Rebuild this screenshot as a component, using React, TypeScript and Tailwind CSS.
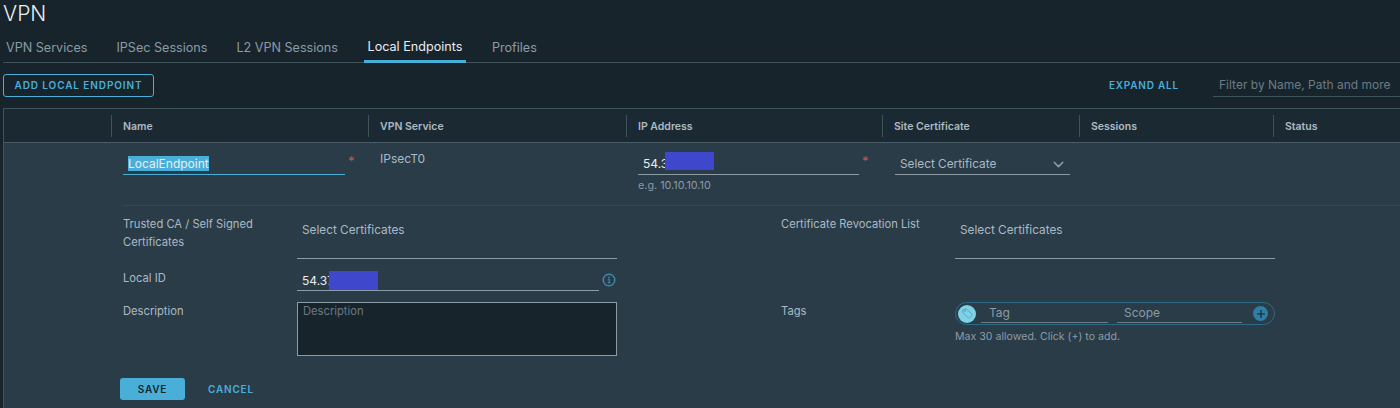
import { FiChevronDown } from "react-icons/fi";

const tabs = ["VPN Services", "IPSec Sessions", "L2 VPN Sessions", "Local Endpoints", "Profiles"];

const columns = [
  { label: "", width: "w-[107px]" },
  { label: "Name", width: "w-[257px]" },
  { label: "VPN Service", width: "w-[258px]" },
  { label: "IP Address", width: "w-[256px]" },
  { label: "Site Certificate", width: "w-[197px]" },
  { label: "Sessions", width: "w-[194px]" },
  { label: "Status", width: "flex-1" },
];

function Required() {
  return <span className="text-[13px] leading-none text-[#c25450]">*</span>;
}

function Redacted({ className }: { className: string }) {
  return <div className={`absolute bg-[#3f48cc] ${className}`} />;
}

function TagIcon() {
  return (
    <svg viewBox="0 0 16 16" className="h-[13px] w-[13px]" fill="none" stroke="#5ba3bd" strokeWidth="1.2">
      <path d="M2 3.6 6.4 2.4l7.2 6.4a1 1 0 0 1 0 1.4l-3.2 3.2a1 1 0 0 1-1.4 0L2.6 7.6z" />
      <circle cx="5" cy="5" r="0.8" />
    </svg>
  );
}

function InfoIcon() {
  return (
    <svg viewBox="0 0 14 14" className="h-[14px] w-[14px]" fill="none" stroke="#3d93b8">
      <circle cx="7" cy="7" r="5.8" strokeWidth="1.3" />
      <path d="M6 6.2h1.2v3.4M5.8 9.8h2.8" strokeWidth="1" />
      <path d="M7 3.6v1.3" strokeWidth="1.3" />
    </svg>
  );
}

export default function App() {
  return (
    <div className="h-[408px] w-[1400px] overflow-hidden bg-[#17242b] font-['Inter',sans-serif] text-[#acbac3]">
      {/* Title */}
      <h1 className="h-[31px] pl-[3px] text-[21px] font-light leading-[28px] text-[#eaedf0]">VPN</h1>

      {/* Tabs */}
      <div className="ml-[3px] flex h-[32px] gap-[29px] border-b border-[#3f5159] pl-[3px] text-[12.6px]">
        {tabs.map((tab) => (
          <div
            key={tab}
            className={
              tab === "Local Endpoints"
                ? "-mx-[3px] -mb-px flex h-[32px] w-[102px] items-center justify-center border-b-[3px] border-[#49afd9] pt-[4px] text-[#eaedf0]"
                : "flex h-[31px] items-center pt-[3px] text-[#8c9ba4]"
            }
          >
            {tab}
          </div>
        ))}
      </div>

      {/* Toolbar */}
      <div className="mt-[11px] flex h-[23px] items-center pl-[3px]">
        <button className="h-[23px] w-[151px] rounded-[3px] border border-[#49afd9] text-[10px] font-semibold tracking-[0.09em] text-[#49afd9]">
          ADD LOCAL ENDPOINT
        </button>
        <span className="ml-auto text-[10px] font-semibold tracking-[0.08em] text-[#49afd9]">EXPAND ALL</span>
        <div className="ml-[34px] flex h-[23px] w-[187px] items-center border-b border-[#3f5159] pl-[6px] text-[12px] text-[#6b7b84]">
          Filter by Name, Path and more
        </div>
      </div>

      {/* Grid */}
      <div className="ml-[3px] mt-[11px] border-l border-t border-[#3f5159]">
        <div className="flex h-[34px] items-center border-b border-[#4a5c66] bg-[#1b2a32] text-[10.5px] font-semibold text-[#acbac3]">
          {columns.map((col, i) => (
            <div key={col.label} className={`flex h-[22px] items-center pt-[2px] ${col.width} ${i > 0 ? "border-l border-[#3f5159] pl-[11px]" : ""}`}>
              {col.label}
            </div>
          ))}
        </div>

        <div className="h-[300px] bg-[#293c48] pl-[119px] text-[11.2px]">
          {/* Row fields */}
          <div className="flex h-[63px] border-b border-[#344853]">
            <div className="flex w-[229px] items-start gap-[3px]">
              <div className="mt-[9px] h-[23px] w-[222px] shrink-0 border-b border-[#49afd9] pl-[5px] pt-[4px] text-[12px] leading-[16px]">
                <span className="bg-[#49afd9] text-[#eaedf0]">LocalEndpoint</span>
              </div>
              <div className="mt-[11px]"><Required /></div>
            </div>
            <div className="w-[286px] pl-[28px] pt-[7px] text-[12px]">IPsecT0</div>
            <div className="w-[257px]">
              <div className="flex items-start gap-[3px]">
                <div className="relative mt-[9px] h-[23px] w-[221px] shrink-0 border-b border-[#8c9ba4] pl-[5px] pt-[4px] text-[12px] leading-[16px] text-[#eaedf0]">
                  54.3
                  <Redacted className="left-[27px] top-0 h-[18px] w-[49px]" />
                </div>
                <div className="mt-[11px]"><Required /></div>
              </div>
              <div className="mt-[3px] text-[10.8px] text-[#8c9ba4]">e.g. 10.10.10.10</div>
            </div>
            <div className="mt-[9px] flex h-[23px] w-[175px] items-center justify-between border-b border-[#8c9ba4] pl-[5px] pr-[3px] pt-[3px] text-[11.8px]">
              Select Certificate
              <FiChevronDown className="h-[17px] w-[17px] text-[#8c9ba4]" />
            </div>
          </div>

          {/* Detail form */}
          <div className="grid grid-cols-[174px_320px_164px_174px_320px] grid-rows-[52px_36px_76px] pt-[8px]">
            <div className="mt-[1px] leading-[18px]">Trusted CA / Self Signed<br />Certificates</div>
            <div className="col-start-2 h-[45px] border-b border-[#8c9ba4] pl-[5px] pt-[8px] text-[11.8px]">Select Certificates</div>
            <div className="col-start-4 mt-[1px] leading-[18px]">Certificate Revocation List</div>
            <div className="col-start-5 h-[45px] border-b border-[#8c9ba4] pl-[5px] pt-[8px] text-[11.8px]">Select Certificates</div>

            <div className="row-start-2 pt-[3px] leading-[18px]">Local ID</div>
            <div className="col-start-2 row-start-2 flex items-start gap-[3px]">
              <div className="relative mt-[6px] h-[19px] w-[302px] shrink-0 border-b border-[#8c9ba4] pl-[5px] pt-[1px] text-[12px] leading-[16px] text-[#eaedf0]">
                54.37
                <Redacted className="left-[32px] top-[-1px] h-[19px] w-[49px]" />
              </div>
              <div className="mt-[7px]"><InfoIcon /></div>
            </div>

            <div className="row-start-3 leading-[18px]">Description</div>
            <div className="col-start-2 row-start-3 h-[54px] border border-[#8c9ba4] bg-[#17242b] pl-[5px] text-[11.2px] text-[#6b7b84]">Description</div>

            <div className="col-start-4 row-start-3 leading-[18px]">Tags</div>
            <div className="col-start-5 row-start-3">
              <div className="flex h-[23px] items-center rounded-full border-[1.5px] border-[#2f6a85] pl-[2px]">
                <div className="flex h-[18px] w-[18px] shrink-0 items-center justify-center rounded-full bg-[#7fd1e6]"><TagIcon /></div>
                <div className="ml-[5px] h-[19px] w-[127px] border-b border-[#6b7b84] pl-[8px] text-[12px] leading-[17px] text-[#8c9ba4]">Tag</div>
                <div className="ml-[9px] h-[19px] w-[125px] border-b border-[#6b7b84] pl-[7px] text-[12px] leading-[17px] text-[#8c9ba4]">Scope</div>
                <div className="ml-[11px] flex h-[15px] w-[15px] shrink-0 items-center justify-center rounded-full bg-[#2f7ea3] text-[#17242b]">
                  <svg viewBox="0 0 10 10" className="h-[10px] w-[10px]" stroke="currentColor" strokeWidth="1.1"><path d="M5 1v8M1 5h8" /></svg>
                </div>
              </div>
              <div className="mt-[5px] text-[10.6px] leading-[14px] text-[#8c9ba4]">Max 30 allowed. Click (+) to add.</div>
            </div>
          </div>

          {/* Actions */}
          <div className="-ml-[3px] flex items-center">
            <button className="h-[22px] w-[65px] rounded-[3px] bg-[#49afd9] text-[10px] font-semibold tracking-[0.08em] text-[#17242b]">SAVE</button>
            <span className="ml-[23px] text-[10px] font-semibold tracking-[0.08em] text-[#49afd9]">CANCEL</span>
          </div>
        </div>
      </div>
    </div>
  );
}
